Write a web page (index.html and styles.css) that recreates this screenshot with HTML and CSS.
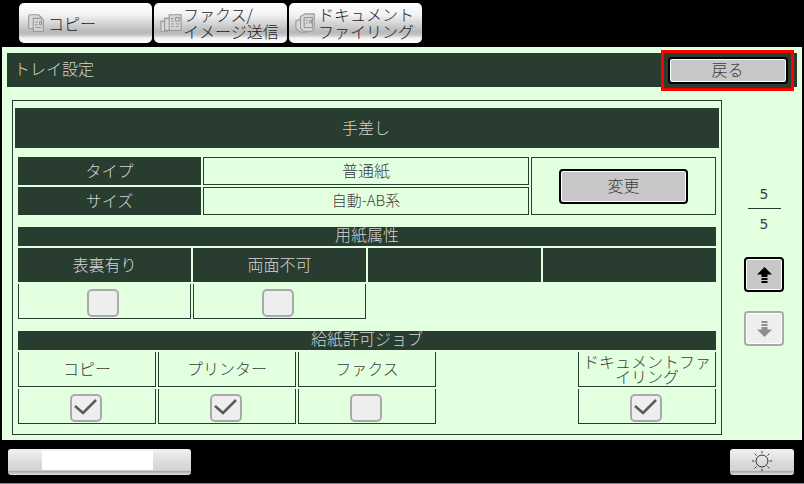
FILE: index.html
```html
<!DOCTYPE html>
<html lang="ja">
<head>
  <meta charset="UTF-8">
  <title>トレイ設定</title>
  <link rel="stylesheet" href="styles.css">
</head>
<body>
  <div class="tabs">
    <div class="tab">
      <svg class="tab-icon" viewBox="0 0 24 24"><path class="sheet" d="M4 5q0-2 2-2h9l3 3v3h2v10q0 2-2 2H11q-2 0-2-2v-1H6q-2 0-2-2z"/><path class="sheet" d="M9 7h9l2 2v12H9z"/><path class="lines" d="M11 11h3M11 14h3M11 17h7M16 10v4h2v-4z"/></svg>
      <span>コピー</span>
    </div>
    <div class="tab">
      <svg class="tab-icon" viewBox="0 0 24 24"><path class="sheet" d="M1 10h7v11H1z"/><path class="sheet" d="M5 7h7v13H5z"/><path class="sheet" d="M10 3h13v17H10z"/><path class="lines" d="M12 7h3M12 10h3M12 13h3M12 16h3M17 6h4v4h-4zM17 13h4M17 16h4"/></svg>
      <span>ファクス/<br>イメージ送信</span>
    </div>
    <div class="tab">
      <svg class="tab-icon" viewBox="0 0 24 24"><path class="sheet" d="M1 10l6-3v12l5 3-6 0-5-4z"/><path class="sheet" d="M6 5l5-3h10v15l-3 4H9l-3-3z"/><path class="lines" d="M10 6h9v11h-9zM12 9h2M12 12h2M16 9h2v3h-2z"/></svg>
      <span>ドキュメント<br>ファイリング</span>
    </div>
  </div>

  <div class="panel">
    <div class="header">
      <span class="header-title">トレイ設定</span>
      <div class="highlight"><button class="btn btn-back">戻る</button></div>
    </div>

    <div class="content">
      <div class="frame">
        <div class="title">手差し</div>

        <div class="inner">
          <div class="info">
            <div class="dark">タイプ</div>
            <div class="value">普通紙</div>
            <div class="change"><button class="btn btn-change">変更</button></div>
            <div class="dark">サイズ</div>
            <div class="value value-small">自動-AB系</div>
          </div>

          <div class="section">用紙属性</div>
          <div class="attrs">
            <div class="dark">表裏有り</div>
            <div class="dark">両面不可</div>
            <div class="dark"></div>
            <div class="dark"></div>
            <div class="cell"><span class="check"></span></div>
            <div class="cell"><span class="check"></span></div>
          </div>

          <div class="section">給紙許可ジョブ</div>
          <div class="jobs">
            <div class="cell">コピー</div>
            <div class="cell">プリンター</div>
            <div class="cell">ファクス</div>
            <div></div>
            <div class="cell cell-wrap">ドキュメントファイリング</div>
            <div class="cell"><span class="check"><svg viewBox="0 0 28 24"><path d="M3 10l8 7L24 4"/></svg></span></div>
            <div class="cell"><span class="check"><svg viewBox="0 0 28 24"><path d="M3 10l8 7L24 4"/></svg></span></div>
            <div class="cell"><span class="check"></span></div>
            <div></div>
            <div class="cell"><span class="check"><svg viewBox="0 0 28 24"><path d="M3 10l8 7L24 4"/></svg></span></div>
          </div>
        </div>
      </div>

      <div class="pager">
        <div class="page-num page-top">5</div>
        <div class="page-num">5</div>
        <button class="btn btn-page">
          <svg viewBox="0 0 15 16"><path d="M7.500 0L15 7.500H10.500V10H4.500V7.500H0zM4.500 11H10.500V13H4.500zM4.500 14H10.500V16H4.500z"/></svg>
        </button>
        <button class="btn btn-page btn-off">
          <svg viewBox="0 0 15 16"><path d="M7.500 16L15 8.500H10.500V6H4.500V8.500H0zM4.500 5H10.500V3H4.500zM4.500 2H10.500V0H4.500z"/></svg>
        </button>
      </div>
    </div>
  </div>

  <div class="footer">
    <div class="status"><div class="status-fill"></div></div>
    <div class="status status-light">
      <svg viewBox="0 0 24 24"><circle cx="12" cy="12" r="6.500"/><path d="M12 1v2.500M12 20.500V23M1 12h2.500M20.500 12H23M4 4l2 2M18 18l2 2M20 4l-2 2M6 18l-2 2"/></svg>
    </div>
  </div>
  <div class="edge"></div>
</body>
</html>
```

FILE: styles.css
```css
body {
  margin: 0;
  width: 804px;
  height: 484px;
  background-color: #000;
  color: #3c3c3c;
  font-family: "Noto Sans CJK JP", "Noto Sans", sans-serif;
  font-size: 16px;
  font-weight: 300;
  overflow: hidden;
}

.tabs {
  display: flex;
  gap: 2px;
  height: 44px;
  padding: 3px 0 0 19px;
  box-sizing: border-box;
}

.tab {
  display: flex;
  align-items: center;
  gap: 1px;
  width: 133px;
  height: 40px;
  padding-left: 6px;
  box-sizing: border-box;
  border-radius: 5px;
  background: linear-gradient(#fff 0, #f2f2f2 30%, #b8b8b8 72%, #c4c4c4 80%, #f4f4f4 88%, #fff 100%);
  color: #1c1c1c;
  line-height: 17px;
}

.tab-icon {
  flex: none;
  width: 22px;
  height: 22px;
}

.tab-icon .sheet {
  fill: #d8d8d8;
  stroke: #999;
  stroke-width: 1.2;
}

.tab-icon .lines {
  fill: none;
  stroke: #8a8a8a;
  stroke-width: 1;
}

.panel {
  width: 800px;
  height: 393px;
  margin: 3px 0 0 2px;
  padding: 6px 5px 0;
  box-sizing: border-box;
  background-color: #e2ffe0;
}

.header {
  display: flex;
  justify-content: space-between;
  align-items: center;
  width: 790px;
  height: 34px;
  background-color: #283c2f;
  color: #d4d4d4;
}

.header-title {
  padding: 0 0 4px 7px;
}

.highlight {
  display: flex;
  align-items: center;
  justify-content: center;
  width: 133px;
  height: 41px;
  margin-right: 3px;
  box-sizing: border-box;
  border: 3px solid #f00;
  background-color: #283c2f;
}

.btn {
  display: flex;
  align-items: center;
  justify-content: center;
  padding: 0 0 3px;
  box-sizing: border-box;
  border: 2px solid #000;
  border-radius: 4px;
  box-shadow: inset 0 0 0 1px #fff;
  background-color: #c8c8c8;
  color: #3c3c3c;
  font: inherit;
}

.btn-back {
  width: 120px;
  height: 27px;
}

.content {
  display: flex;
  margin: 13px 0 0 5px;
}

.frame {
  width: 710px;
  height: 335px;
  padding: 7px 2px 0;
  box-sizing: border-box;
  border: 1px solid #283c2f;
}

.title {
  display: flex;
  align-items: center;
  justify-content: center;
  height: 40px;
  padding: 0 2px 3px 0;
  box-sizing: border-box;
  background-color: #283c2f;
  color: #d4d4d4;
}

.inner {
  margin: 9px 3px 0;
}

.dark {
  display: flex;
  align-items: center;
  justify-content: center;
  padding-bottom: 3px;
  background-color: #283c2f;
  color: #d4d4d4;
}

.info {
  display: grid;
  grid-template-columns: 183px 326px 185px;
  grid-template-rows: 28px 28px;
  gap: 2px;
}

.value {
  display: flex;
  align-items: center;
  justify-content: center;
  padding-bottom: 3px;
  border: 1px solid #283c2f;
}

.value-small {
  font-size: 15px;
}

.change {
  display: flex;
  align-items: center;
  justify-content: center;
  grid-column: 3;
  grid-row: 1 / span 2;
  border: 1px solid #283c2f;
}

.btn-change {
  width: 129px;
  height: 35px;
}

.section {
  height: 19px;
  margin: 12px 0 2px;
  background-color: #283c2f;
  color: #d4d4d4;
  line-height: 15px;
  text-align: center;
}

.attrs {
  display: grid;
  grid-template-columns: repeat(4, 173px);
  grid-template-rows: 34px 35px;
  gap: 2px;
}

.jobs {
  display: grid;
  grid-template-columns: repeat(5, 138px);
  grid-template-rows: 35px 35px;
  gap: 2px;
}

.cell {
  display: flex;
  align-items: center;
  justify-content: center;
  padding-bottom: 3px;
  border: 1px solid #283c2f;
  border-top: 0;
  box-sizing: border-box;
}

.cell-wrap {
  padding: 0;
  line-height: 15px;
  text-align: center;
}

.check {
  display: flex;
  flex: none;
  align-items: center;
  justify-content: center;
  width: 32px;
  height: 28px;
  margin: 7px 2px 0 0;
  box-sizing: border-box;
  border: 2px solid #aaa;
  border-radius: 5px;
  background-color: #eee;
}

.attrs .check {
  margin-right: 3px;
}

.check svg {
  width: 28px;
  height: 24px;
}

.check path {
  fill: none;
  stroke: #5a5a5a;
  stroke-width: 2.5;
}

.pager {
  display: flex;
  flex-direction: column;
  align-items: center;
  width: 40px;
  margin-left: 22px;
  padding-top: 84px;
}

.page-num {
  width: 33px;
  height: 30px;
  font-family: "DejaVu Sans", sans-serif;
  font-size: 14px;
  font-weight: 400;
  line-height: 30px;
  text-align: center;
}

.page-top {
  height: 24px;
  border-bottom: 1px solid #283c2f;
  line-height: 20px;
}

.btn-page {
  flex: none;
  width: 40px;
  height: 35px;
  margin-top: 18px;
  padding: 0;
}

.btn-page svg {
  width: 15px;
  height: 16px;
  fill: #000;
}

.btn-off {
  margin-top: 19px;
  border-color: #aaa;
  background-color: #eee;
}

.btn-off svg {
  fill: #8e8e8e;
}

.footer {
  display: flex;
  justify-content: space-between;
  height: 26px;
  margin-top: 9px;
  padding: 0 10px 0 8px;
}

.status {
  display: flex;
  align-items: center;
  justify-content: center;
  width: 183px;
  height: 26px;
  padding: 0 4px 3px 0;
  box-sizing: border-box;
  border-radius: 3px;
  background: linear-gradient(#f2f2f2 0, #d8d8d8 60%, #d4d4d4 82%, #a8a8a8 86%, #e0e0e0 100%);
}

.status-fill {
  width: 111px;
  height: 19px;
  background-color: #fff;
}

.status-light {
  width: 64px;
  padding: 0 0 3px;
}

.status-light svg {
  width: 22px;
  height: 22px;
  fill: none;
  stroke: #222;
  stroke-width: 1;
}

.edge {
  height: 1px;
  margin-top: 8px;
  background-color: #7d8a96;
}
```
